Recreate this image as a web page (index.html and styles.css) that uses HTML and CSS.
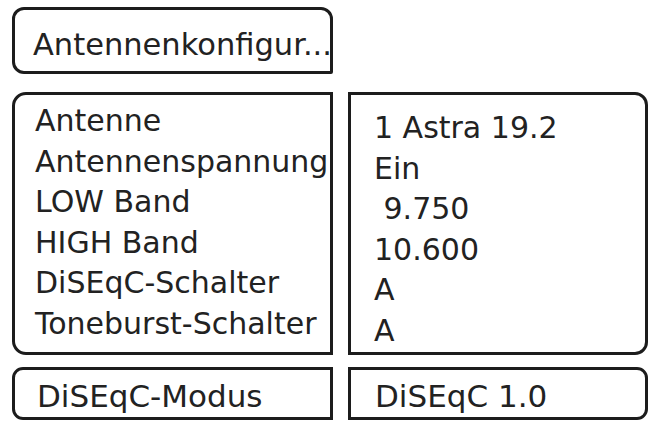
FILE: index.html
```html
<!DOCTYPE html>
<html lang="de">
<head>
<meta charset="utf-8">
<link rel="stylesheet" href="styles.css">
</head>
<body>
<div class="page">
  <div class="title box">Antennenkonfigur...</div>
  <div class="pair main">
    <div class="box left">
      <div class="row">Antenne</div>
      <div class="row">Antennenspannung</div>
      <div class="row">LOW Band</div>
      <div class="row">HIGH Band</div>
      <div class="row">DiSEqC-Schalter</div>
      <div class="row">Toneburst-Schalter</div>
    </div>
    <div class="box right">
      <div class="row">1 Astra 19.2</div>
      <div class="row">Ein</div>
      <div class="row"> 9.750</div>
      <div class="row">10.600</div>
      <div class="row">A</div>
      <div class="row">A</div>
    </div>
  </div>
  <div class="pair bottom">
    <div class="box left mode">DiSEqC-Modus</div>
    <div class="box right mode-val">DiSEqC 1.0</div>
  </div>
</div>
</body>
</html>
```

FILE: styles.css
```css
* { box-sizing: border-box; }
html, body { margin: 0; padding: 0; background: #fff; }
body {
  font-family: "DejaVu Sans", Verdana, sans-serif;
  color: #222;
  width: 651px;
  height: 428px;
  overflow: hidden;
}
.page {
  padding: 7px 0 0 12px;
  display: flex;
  flex-direction: column;
}
.box {
  border: 3px solid #1c1c1c;
  background: #fff;
}
.title {
  width: 321px;
  height: 67px;
  border-radius: 12px 12px 2px 12px;
  font-size: 30.5px;
  line-height: 40px;
  padding: 15px 0 0 18px;
  white-space: nowrap;
}
.pair {
  display: grid;
  grid-template-columns: 321px 300px;
  column-gap: 15px;
}
.main { margin-top: 18px; height: 261px; }
.left { border-radius: 14px 0 0 14px; }
.right { border-radius: 0 13px 13px 0; }
.main .left { padding: 6px 0 0 20px; }
.main .right { padding: 13px 0 0 23px; }
.row {
  font-size: 30px;
  line-height: 40.6px;
  height: 40.6px;
  white-space: pre;
}
.bottom { margin-top: 14px; height: 53px; }
.bottom .left { border-radius: 11px 0 0 11px; }
.bottom .right { border-radius: 0 11px 11px 0; }
.mode, .mode-val {
  font-size: 31px;
  line-height: 40px;
  padding-top: 6px;
  white-space: nowrap;
}
.mode { padding-left: 22px; }
.mode-val { padding-left: 24px; }
```
